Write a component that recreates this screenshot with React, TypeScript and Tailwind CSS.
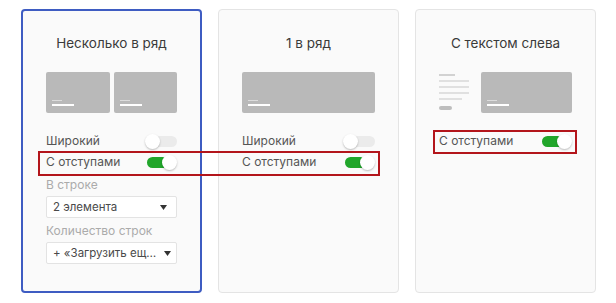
import type { ReactNode } from 'react';

const FONT = { fontFamily: 'Inter, "Noto Sans", sans-serif' };

function Toggle({ on }: { on: boolean }) {
  return (
    <div className="relative w-[32px] h-[14px] shrink-0">
      <div
        className={
          on
            ? 'absolute left-[2px] right-[1px] top-[2px] h-[11px] rounded-full bg-[#21a62b]'
            : 'absolute left-[2px] right-[0px] top-[2px] h-[11px] rounded-full bg-[#ebebeb]'
        }
      />
      <div
        className={
          on
            ? 'absolute right-0 top-0 w-[15px] h-[15px] rounded-full bg-white shadow-[0_1px_2px_rgba(0,0,0,0.25)]'
            : 'absolute left-0 top-0 w-[15px] h-[15px] rounded-full bg-white shadow-[0_1px_2px_rgba(0,0,0,0.25)]'
        }
      />
    </div>
  );
}

function SwitchRow({ label, on, className = '' }: { label: string; on: boolean; className?: string }) {
  return (
    <div className={`flex items-center justify-between h-[14px] ${className}`}>
      <span className="text-[12px] leading-[14px] text-[#555]">{label}</span>
      <Toggle on={on} />
    </div>
  );
}

function Select({ value }: { value: string }) {
  return (
    <div className="flex items-center justify-between gap-[8px] h-[22px] pl-[6px] pr-[9px] bg-white border border-[#e3e3e3] rounded-[2px]">
      <span className="text-[11.5px] text-[#4a4a4a] leading-[14px] whitespace-nowrap">{value}</span>
      <svg width="7" height="5" viewBox="0 0 7 5" className="shrink-0">
        <path d="M0 0h7L3.5 5z" fill="#333" />
      </svg>
    </div>
  );
}

function Thumb({ className = '' }: { className?: string }) {
  return (
    <div className={`h-[41px] bg-[#b9b9b9] rounded-[2px] flex flex-col justify-end pl-[6px] pb-[7px] ${className}`}>
      <div className="w-[10px] h-[1px] bg-[#dcdcdc] mb-[3px]" />
      <div className="w-[22px] h-[2px] bg-white" />
    </div>
  );
}

function Card({ title, active, children }: { title: string; active?: boolean; children: ReactNode }) {
  return (
    <div
      className={
        active
          ? 'w-[181px] h-[284px] shrink-0 rounded-[4px] border-2 border-[#3e5cc2] bg-[#fafafa] px-[23px] pt-[23px]'
          : 'w-[181px] h-[284px] shrink-0 rounded-[4px] border border-[#e4e4e4] bg-[#fafafa] px-[23px] pt-[24px]'
      }
    >
      <div className="text-center text-[13.5px] leading-[18px] text-[#3a3a3a]">{title}</div>
      {children}
    </div>
  );
}

export default function App() {
  return (
    <div className="relative w-[616px] h-[303px] bg-white" style={FONT}>
      <div className="flex gap-[16px] pl-[21px] pt-[9px]">
        <Card title="Несколько в ряд" active>
          <div className="flex gap-[4px] mt-[20px]">
            <Thumb className="flex-1" />
            <Thumb className="flex-1" />
          </div>
          <SwitchRow label="Широкий" on={false} className="mt-[21px]" />
          <SwitchRow label="С отступами" on className="mt-[7px]" />
          <div className="mt-[8px] text-[12px] leading-[16px] text-[#ababab]">В строке</div>
          <div className="mt-[3px]">
            <Select value="2 элемента" />
          </div>
          <div className="mt-[5px] text-[12px] leading-[16px] text-[#ababab]">Количество строк</div>
          <div className="mt-[3px]">
            <Select value="+ «Загрузить ещ…" />
          </div>
        </Card>
        <Card title="1 в ряд">
          <div className="flex mt-[20px]">
            <Thumb className="flex-1" />
          </div>
          <SwitchRow label="Широкий" on={false} className="mt-[21px]" />
          <SwitchRow label="С отступами" on className="mt-[7px]" />
        </Card>
        <Card title="С текстом слева">
          <div className="flex gap-[12px] mt-[20px] h-[41px]">
            <div className="w-[30px] flex flex-col pt-[2px]">
              <div className="w-[16px] h-[2px] bg-[#d2d2d2]" />
              <div className="w-[30px] h-[2px] bg-[#e0e0e0] mt-[4px]" />
              <div className="w-[30px] h-[2px] bg-[#e0e0e0] mt-[4px]" />
              <div className="w-[30px] h-[2px] bg-[#e0e0e0] mt-[4px]" />
              <div className="w-[23px] h-[2px] bg-[#e0e0e0] mt-[4px]" />
              <div className="w-[13px] h-[4px] rounded-full bg-[#bdbdbd] mt-[6px]" />
            </div>
            <Thumb className="flex-1" />
          </div>
          <SwitchRow label="С отступами" on className="mt-[21px]" />
        </Card>
      </div>
      <div className="absolute left-[38px] top-[151px] w-[342px] h-[25px] border-2 border-[#b3151b]" />
      <div className="absolute left-[433px] top-[130px] w-[144px] h-[24px] border-2 border-[#b3151b]" />
    </div>
  );
}
